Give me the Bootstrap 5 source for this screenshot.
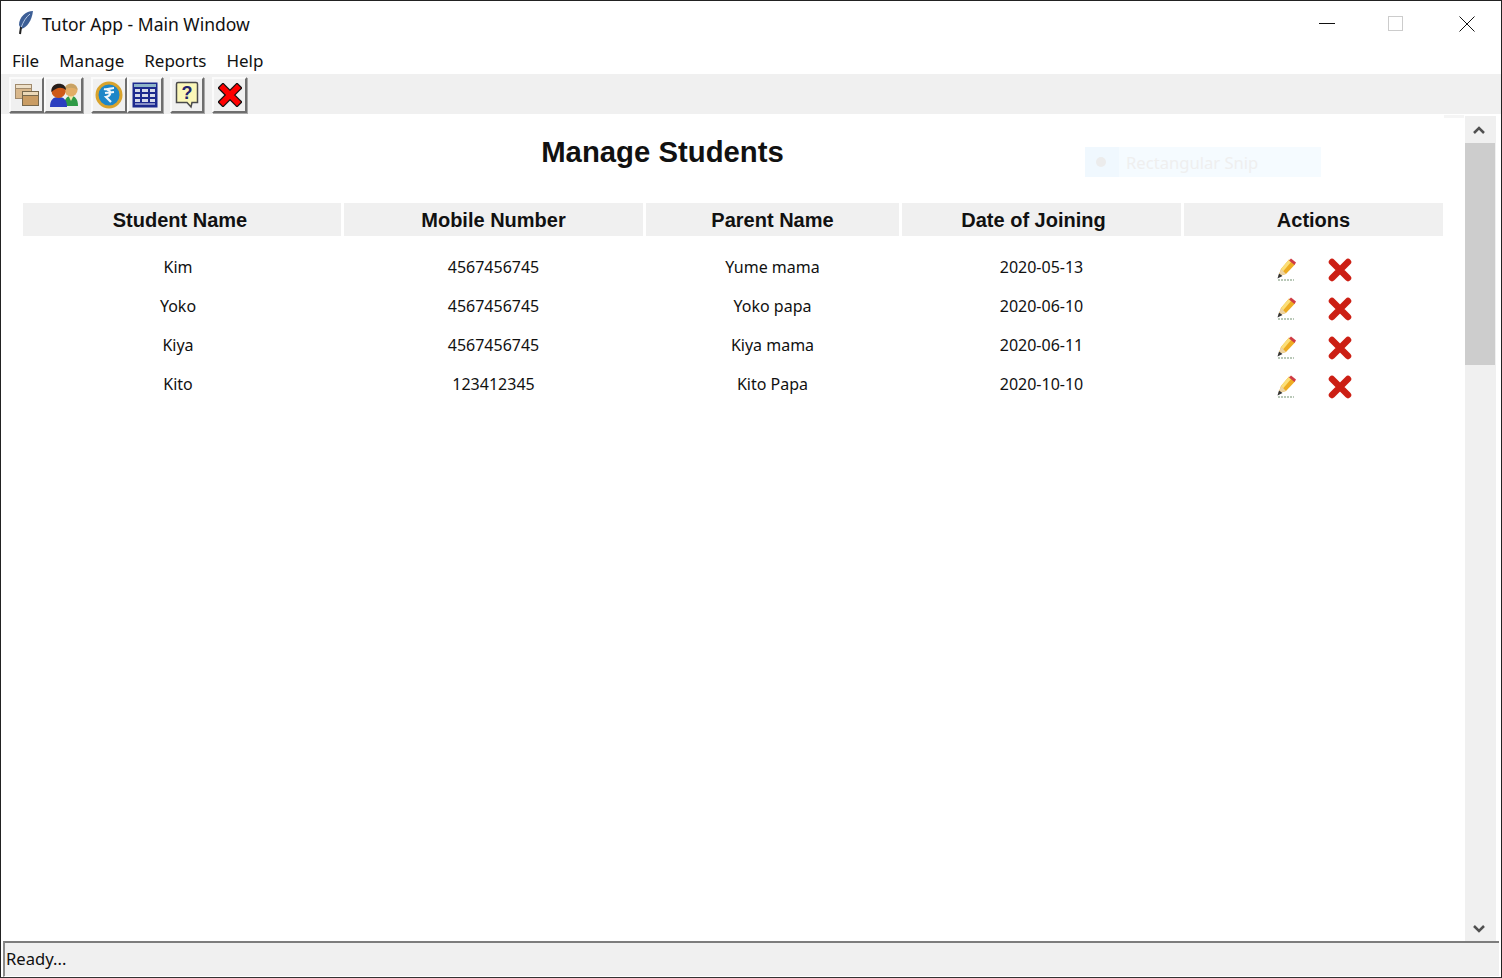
<!DOCTYPE html>
<html lang="en">
<head>
  <meta charset="UTF-8">
  <meta name="viewport" content="width=device-width, initial-scale=1">
  <title>Tutor App - Main Window</title>
  <link href="https://cdn.jsdelivr.net/npm/bootstrap@5.3.3/dist/css/bootstrap.min.css" rel="stylesheet">
  <style>
    html, body { height: 100%; margin: 0; overflow: hidden; background: #fff; }
    .app-window {
      height: 978px;
      border: 1px solid #222;
      border-bottom-color: #333;
      font-family: "Noto Sans", sans-serif;
      color: #111;
      background: #fff;
      position: relative;
    }
    .title-row { height: 43px; padding-left: 16px; font-size: 17.5px; }
    .title-text { margin-left: 8px; margin-top: 3px; }
    .win-controls { padding-top: 2px; }
    .win-controls svg { display: block; }
    .win-min { margin-right: 53px; }
    .win-max { margin-right: 55px; }
    .win-close { margin-right: 26px; }
    .menu-row { height: 30px; padding-left: 11px; gap: 20px; font-size: 17px; line-height: 34px; }
    .menu-row a { color: #111; text-decoration: none; }
    .tool-row { height: 40px; background: #f0f0f0; padding: 3px 0 0 8px; }
    .tool-btn {
      height: 36px;
      padding: 0;
      background: #f0f0f0;
      border: 2px solid;
      border-color: #fbfbfb #6e6e6e #6e6e6e #fbfbfb;
      border-radius: 0;
      box-shadow: 1px 1px 0 #a8a8a8;
    }
    .gap-8 { margin-left: 8px; }
    .gap-7 { margin-left: 7px; }
    .w34 { width: 34px; }
    .w35 { width: 35px; }
    .w36 { width: 36px; }
    .w39 { width: 39px; }
    .main-pane { height: 827px; min-height: 0; }
    .content-pane { width: 1464px; position: relative; }
    .page-title {
      font-family: "Liberation Sans", sans-serif;
      font-weight: 700;
      font-size: 29.3px;
      line-height: 34px;
      text-align: center;
      margin: 21px 0 34px;
      padding-right: 141px;
      color: #111;
    }
    .student-table {
      table-layout: fixed;
      width: 1426px;
      margin: 0 0 0 19px;
      border-collapse: separate;
      border-spacing: 3px 0;
      --bs-table-bg: transparent;
    }
    .student-table th {
      height: 33px;
      padding: 0;
      background: #f0f0f0;
      font-family: "Liberation Sans", sans-serif;
      font-size: 20px;
      font-weight: 700;
      text-align: center;
      vertical-align: middle;
      color: #111;
    }
    .student-table td {
      height: 39px;
      padding: 0;
      font-size: 16px;
      text-align: center;
      vertical-align: middle;
      color: #111;
    }
    .student-table tbody tr:first-child td { height: 50px; padding-top: 11px; }
    .student-table td.name-col { padding-right: 8px; }
    .student-table th.name-col { padding-right: 4px; }
    .student-table th.date-col { padding-right: 16px; }
    .row-actions { padding-left: 92px; gap: 32px; margin-top: 6px; }
    .snip-ghost {
      position: absolute;
      left: 1084px;
      top: 33px;
      width: 236px;
      height: 30px;
      background: #f5fbff;
      color: #efefef;
      font-size: 16.6px;
      line-height: 32px;
      padding-left: 41px;
    }
    .snip-ghost::before {
      content: "";
      position: absolute;
      left: 0;
      top: 0;
      width: 34px;
      height: 30px;
      background: #f0f8fe;
    }
    .snip-ghost::after {
      content: "";
      position: absolute;
      left: 11px;
      top: 10px;
      width: 10px;
      height: 10px;
      border-radius: 50%;
      background: #ececec;
    }
    .edge-ghost { position: absolute; left: 1443px; top: 1px; width: 20px; height: 3px; background: #f5f5f5; }
    .scroll-track { width: 31px; background: #f0f0f0; margin-top: 2px; }
    .scroll-arrow { height: 27px; padding-right: 3px; }
    .scroll-down { padding-top: 2px; }
    .scroll-thumb { height: 222px; background: #cdcdcd; margin-right: 1px; }
    .status-row {
      height: 36px;
      margin-left: 2px;
      margin-right: 2px;
      background: #f0f0f0;
      border-top: 2px solid #7d7d7d;
      border-left: 2px solid #8a8a8a;
      border-bottom: 1px solid #fff;
      font-size: 16.6px;
      line-height: 31px;
      padding-left: 1px;
    }
  </style>
</head>
<body>

<svg width="0" height="0" class="position-absolute">
  <symbol id="ico-pencil" viewBox="0 0 20 24">
    <path d="M2.500 18 L5 11 L13 1.500 L19 6.500 L10 16 Z" fill="#eeac22"/>
    <path d="M5 11 L13 1.500 L15.500 3.500 L7 13.500 Z" fill="#fbdf78"/>
    <path d="M13 2.500 L15 0.500 L20 4.500 L18.500 7 Z" fill="#cf3c45"/>
    <path d="M2.500 18 L5 11 L10 16 Z" fill="#ecd3a4"/>
    <path d="M1.500 20.500 L3 15.500 L6.500 18 Z" fill="#333"/>
    <path d="M2 22 H18" stroke="#b9c8b8" stroke-width="2" stroke-dasharray="2 1"/>
  </symbol>
  <symbol id="ico-redx" viewBox="0 0 24 24">
    <path d="M4 4 L20 20 M20 4 L4 20" stroke="#cc1f14" stroke-width="6.500" stroke-linecap="round"/>
  </symbol>
</svg>

<div class="app-window d-flex flex-column">

  <div class="title-row d-flex align-items-center flex-shrink-0">
    <svg width="17" height="25" viewBox="0 0 17 25">
      <path d="M16 1 C9 1 2 7 2 15 L4 19 C10 18 15 10 16 1 Z" fill="#3d5f96"/>
      <path d="M13 4 C9 7 6 12 4 18" stroke="#b9cbe6" stroke-width="1" fill="none"/>
      <path d="M4 17 L3 24" stroke="#222" stroke-width="2"/>
    </svg>
    <span class="title-text">Tutor App - Main Window</span>
    <div class="win-controls d-flex align-items-center ms-auto">
      <svg class="win-min" width="16" height="16"><path d="M0 7.500 H16" stroke="#111"/></svg>
      <svg class="win-max" width="16" height="16"><rect x="0.500" y="0.500" width="14" height="14" fill="none" stroke="#ccc"/></svg>
      <svg class="win-close" width="16" height="16"><path d="M0.500 0.500 L15.500 15.500 M15.500 0.500 L0.500 15.500" stroke="#111"/></svg>
    </div>
  </div>

  <nav class="menu-row d-flex flex-shrink-0">
    <a href="#">File</a>
    <a href="#">Manage</a>
    <a href="#">Reports</a>
    <a href="#">Help</a>
  </nav>

  <div class="tool-row d-flex flex-shrink-0">
    <button class="tool-btn w35 d-flex align-items-center justify-content-center" type="button" aria-label="Files">
      <svg width="26" height="24" viewBox="0 0 26 24">
        <rect x="1.500" y="1.500" width="16" height="14" fill="#d9b88c" stroke="#a08a6c"/>
        <rect x="1.500" y="1.500" width="16" height="4" fill="#eee0c8" stroke="#a08a6c"/>
        <rect x="8.500" y="8.500" width="16" height="14" fill="#c99c63" stroke="#77684c"/>
        <rect x="8.500" y="8.500" width="16" height="4" fill="#ecd9b8" stroke="#77684c"/>
      </svg>
    </button>
    <button class="tool-btn w39 d-flex align-items-center justify-content-center" type="button" aria-label="Students">
      <svg width="30" height="26" viewBox="0 0 30 26">
        <path d="M15 24 C15 17 18 14 22 14 C26 14 29 17 29 24 Z" fill="#2f9a46"/>
        <path d="M19.500 14 L22 19 L24.500 14 Z" fill="#f1e8a8"/>
        <circle cx="22" cy="8" r="6.500" fill="#e3ad66"/>
        <path d="M15.500 8 C15.500 0 28.500 0 28.500 8 C25 5 19 5 15.500 8 Z" fill="#c7a264"/>
        <path d="M1 25 C1 18 4 15 9.500 15 C15 15 18 18 18 25 Z" fill="#2b3fc0"/>
        <circle cx="9.500" cy="9" r="7" fill="#cf5a18"/>
        <path d="M2.500 10 C1 0 17 -1 17 8 C12 4 7 6 2.500 10 Z" fill="#241d1b"/>
      </svg>
    </button>
    <button class="tool-btn w36 gap-8 d-flex align-items-center justify-content-center" type="button" aria-label="Fees">
      <svg width="28" height="28" viewBox="0 0 28 28">
        <circle cx="14" cy="14" r="12" fill="#1c86c8" stroke="#d9a32c" stroke-width="3"/>
        <path d="M9 8 C12 9 16 7 19 7 M10 12 L19 11 M12 8.500 C17 10 16 15 11 16 L16 21" fill="none" stroke="#eef6fb" stroke-width="2.200"/>
      </svg>
    </button>
    <button class="tool-btn w36 d-flex align-items-center justify-content-center" type="button" aria-label="Reports">
      <svg width="26" height="26" viewBox="0 0 26 26">
        <rect x="0.500" y="0.500" width="25" height="25" fill="#1d2a8e"/>
        <rect x="2" y="2" width="22" height="3" fill="#8fb5c8"/>
        <path d="M3 7 H8 V10 H3 Z M10 7 H16 V10 H10 Z M18 7 H23 V10 H18 Z M3 12 H8 V15 H3 Z M10 12 H16 V15 H10 Z M18 12 H23 V15 H18 Z M3 17 H8 V20 H3 Z M10 17 H16 V20 H10 Z M18 17 H23 V20 H18 Z" fill="#d8dcea"/>
        <path d="M3 22 H23" stroke="#aab0d8" stroke-width="1.500"/>
      </svg>
    </button>
    <button class="tool-btn w34 gap-7 d-flex align-items-center justify-content-center" type="button" aria-label="Help">
      <svg width="24" height="28" viewBox="0 0 24 28">
        <path d="M3 1.500 H21 Q22.500 1.500 22.500 3 V21.500 H17 L16 26 L12 21.500 H1.500 V3 Q1.500 1.500 3 1.500 Z" fill="#fbf7b8" stroke="#4a4a4a" stroke-width="1.500"/>
        <text x="12" y="18" text-anchor="middle" font-family="Liberation Sans, sans-serif" font-weight="700" font-size="18" fill="#23236e">?</text>
      </svg>
    </button>
    <button class="tool-btn w35 gap-8 d-flex align-items-center justify-content-center" type="button" aria-label="Exit">
      <svg width="24" height="24" viewBox="0 0 24 24">
        <path d="M5 5 L19 19 M19 5 L5 19" stroke="#111" stroke-width="8" stroke-linecap="square"/>
        <path d="M5 5 L19 19 M19 5 L5 19" stroke="#f00" stroke-width="5.500" stroke-linecap="square"/>
      </svg>
    </button>
  </div>

  <div class="main-pane d-flex flex-shrink-0">
    <div class="content-pane flex-shrink-0">
      <div class="edge-ghost"></div>
      <h1 class="page-title">Manage Students</h1>
      <div class="snip-ghost">Rectangular Snip</div>
      <table class="table table-borderless student-table">
        <colgroup>
          <col style="width:318px"><col style="width:299px"><col style="width:253px"><col style="width:279px"><col style="width:259px">
        </colgroup>
        <thead>
          <tr><th class="name-col">Student Name</th><th>Mobile Number</th><th>Parent Name</th><th class="date-col">Date of Joining</th><th>Actions</th></tr>
        </thead>
        <tbody id="studentRows"></tbody>
      </table>
    </div>
    <div class="scroll-track d-flex flex-column flex-shrink-0">
      <div class="scroll-arrow d-flex align-items-center justify-content-center">
        <svg width="14" height="10"><path d="M2 8 L7 3 L12 8" fill="none" stroke="#505050" stroke-width="2.500"/></svg>
      </div>
      <div class="scroll-thumb"></div>
      <div class="scroll-arrow scroll-down d-flex align-items-center justify-content-center mt-auto">
        <svg width="14" height="10"><path d="M2 2 L7 7 L12 2" fill="none" stroke="#505050" stroke-width="2.500"/></svg>
      </div>
    </div>
  </div>

  <div class="status-row flex-grow-1">Ready...</div>
</div>

<script src="https://cdn.jsdelivr.net/npm/bootstrap@5.3.3/dist/js/bootstrap.bundle.min.js"></script>
<script>
  const students = [
    ["Kim", "4567456745", "Yume mama", "2020-05-13"],
    ["Yoko", "4567456745", "Yoko papa", "2020-06-10"],
    ["Kiya", "4567456745", "Kiya mama", "2020-06-11"],
    ["Kito", "123412345", "Kito Papa", "2020-10-10"]
  ];

  document.getElementById("studentRows").innerHTML = students.map(s => `
    <tr>
      <td class="name-col">${s[0]}</td><td>${s[1]}</td><td>${s[2]}</td><td>${s[3]}</td>
      <td><div class="row-actions d-flex align-items-center">
        <svg width="20" height="24"><use href="#ico-pencil"/></svg>
        <svg width="24" height="24"><use href="#ico-redx"/></svg>
      </div></td>
    </tr>`).join("");
</script>
</body>
</html>
